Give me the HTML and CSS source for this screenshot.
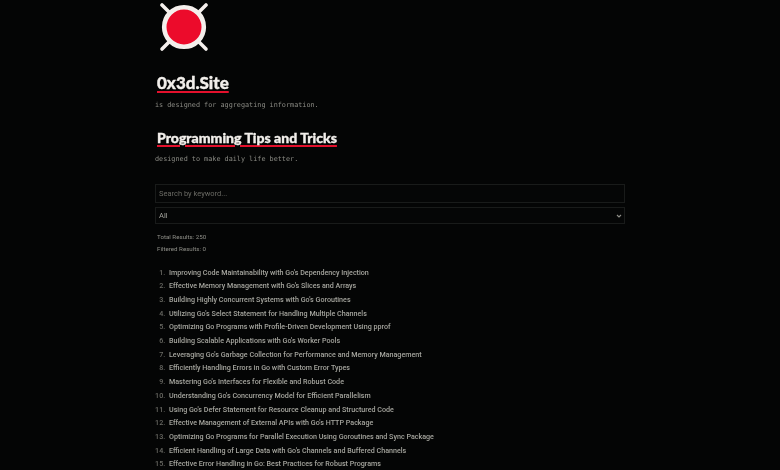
FILE: index.html
```html
<!DOCTYPE html>
<html lang="en">
<head>
<meta charset="utf-8">
<title>Programming Tips and Tricks</title>
<link rel="stylesheet" href="styles.css">
</head>
<body>
<main class="page">
  <svg class="logo" width="60" height="56" viewBox="0 0 60 56" aria-hidden="true">
    <g stroke="#f4efec" stroke-width="3.6" stroke-linecap="round" fill="none">
      <line x1="7" y1="5" x2="17" y2="15"/>
      <line x1="51" y1="5" x2="41" y2="15"/>
      <line x1="7" y1="49" x2="17" y2="39"/>
      <line x1="51" y1="49" x2="41" y2="39"/>
    </g>
    <circle cx="29" cy="27" r="19.8" fill="#ec0b2b" stroke="#f4efec" stroke-width="4.6"/>
  </svg>
  <h1 class="title">0x3d.Site</h1>
  <p class="tagline">is designed for aggregating information.</p>
  <h2 class="title title-second">Programming Tips and Tricks</h2>
  <p class="tagline tagline-second">designed to make daily life better.</p>
  <input class="field" type="text" placeholder="Search by keyword...">
  <select class="field field-select"><option>All</option></select>
  <p class="count">Total Results: 250</p>
  <p class="count">Filtered Results: 0</p>
  <ol class="results">
    <li>Improving Code Maintainability with Go's Dependency Injection</li>
    <li>Effective Memory Management with Go's Slices and Arrays</li>
    <li>Building Highly Concurrent Systems with Go's Goroutines</li>
    <li>Utilizing Go's Select Statement for Handling Multiple Channels</li>
    <li>Optimizing Go Programs with Profile-Driven Development Using pprof</li>
    <li>Building Scalable Applications with Go's Worker Pools</li>
    <li>Leveraging Go's Garbage Collection for Performance and Memory Management</li>
    <li>Efficiently Handling Errors in Go with Custom Error Types</li>
    <li>Mastering Go's Interfaces for Flexible and Robust Code</li>
    <li>Understanding Go's Concurrency Model for Efficient Parallelism</li>
    <li>Using Go's Defer Statement for Resource Cleanup and Structured Code</li>
    <li>Effective Management of External APIs with Go's HTTP Package</li>
    <li>Optimizing Go Programs for Parallel Execution Using Goroutines and Sync Package</li>
    <li>Efficient Handling of Large Data with Go's Channels and Buffered Channels</li>
    <li>Effective Error Handling in Go: Best Practices for Robust Programs</li>
  </ol>
</main>
</body>
</html>
```
FILE: styles.css
```css
html, body {
  margin: 0;
  height: 470px;
  overflow: hidden;
  background: #040505;
}
.page {
  width: 470px;
  margin: 0 auto;
  font-family: Roboto, sans-serif;
  color: #a5a59e;
  filter: blur(0.3px);
}
.logo {
  display: block;
}
.title {
  margin: 17px 0 0 2px;
  font-family: Lato, sans-serif;
  font-size: 17px;
  font-weight: 900;
  line-height: 20px;
  color: #f2efeb;
  -webkit-text-stroke: 0.35px #f2efeb;
  text-decoration: underline #e3102c 2px;
  text-underline-offset: 2px;
}
.title-second {
  margin-top: 17px;
  font-size: 14.05px;
}
.tagline {
  margin: 6px 0 0;
  font-family: "DejaVu Sans Mono", monospace;
  font-size: 6.8px;
  line-height: 12px;
  color: #8b8b84;
}
.tagline-second {
  margin-top: 5px;
}
.field {
  display: block;
  box-sizing: border-box;
  width: 470px;
  margin: 0;
  padding: 0 3px;
  background: #050606;
  border: 1px solid #191b1a;
  border-radius: 0;
  color: #a5a59e;
  font-family: Roboto, sans-serif;
  font-size: 7.5px;
}
input.field {
  height: 19px;
  margin-top: 19px;
}
input.field::placeholder {
  color: #6a6a64;
}
.field-select {
  height: 17px;
  margin-top: 4px;
  appearance: none;
  background-image: url("data:image/svg+xml,%3Csvg xmlns='http://www.w3.org/2000/svg' width='6' height='4' viewBox='0 0 6 4'%3E%3Cpath d='M1 1 3 3 5 1' fill='none' stroke='%2390908a' stroke-width='1.1'/%3E%3C/svg%3E");
  background-repeat: no-repeat;
  background-position: right 2px center;
}
.count {
  margin: 9px 0 0 2px;
  font-size: 6.2px;
  line-height: 9px;
  color: #8f8f88;
}
.count + .count {
  margin-top: 2.5px;
}
.results {
  margin: 12px 0 0;
  padding: 0 0 0 12px;
  font-size: 7.15px;
  line-height: 13.7px;
  font-weight: 500;
  color: #a5a59e;
}
.results li {
  padding-left: 2px;
}
.results li::marker {
  color: #6a6a64;
}
```
